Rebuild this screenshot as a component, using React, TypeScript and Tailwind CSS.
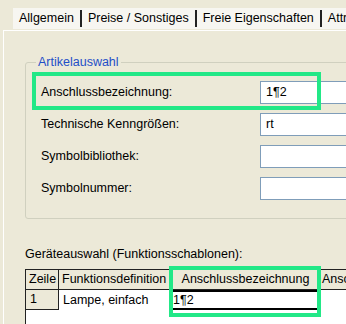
export default function App() {
  const tabs = ["Allgemein", "Preise / Sonstiges", "Freie Eigenschaften", "Attribute"];
  const rows = [
    { label: "Anschlussbezeichnung:", value: "1¶2" },
    { label: "Technische Kenngrößen:", value: "rt" },
    { label: "Symbolbibliothek:", value: "" },
    { label: "Symbolnummer:", value: "" },
  ];
  return (
    <div className="relative w-[346px] h-[324px] overflow-hidden bg-[#ECE9D8] text-black text-[12.5px] leading-[15px] font-['Liberation_Sans',Arial,sans-serif]">
      {/* tab strip */}
      <div className="flex h-[30px] pt-[8px] pl-[13px]">
        <div className="flex h-[21px] items-center bg-[#F7F6F1] whitespace-nowrap">
          {tabs.map((t, i) => (
            <div key={t} className="flex items-center h-full">
              <span className="px-[6px]">{t}</span>
              {i < tabs.length - 1 && <span className="h-[17px] w-[2px] bg-[#222]" />}
            </div>
          ))}
        </div>
      </div>
      {/* panel */}
      <div className="ml-[3px] h-[294px] border-l border-t border-white pl-[21px]">
        <fieldset className="mt-[24px] w-[400px] rounded-[3px] border border-[#D0D0BF] pl-[15px] pt-[11px] pb-[18px]">
          <legend className="ml-[-5px] px-[2px] text-[#1F4FC8]">Artikelauswahl</legend>
          <div className="flex flex-col gap-[9px]">
            {rows.map((r) => (
              <div key={r.label} className="flex items-center h-[23px]">
                <span className="w-[219px]">{r.label}</span>
                <div className="h-[23px] w-[130px] border border-[#7F9DB9] bg-white pl-[5px] flex items-center">
                  {r.value}
                </div>
              </div>
            ))}
          </div>
        </fieldset>
        <div className="mt-[28px]">Geräteauswahl (Funktionsschablonen):</div>
        <div className="mt-[7px] w-[400px] border-l border-t border-[#222] bg-white h-[60px]">
          <div className="flex h-[20px] bg-[#ECE9D8] border-b border-[#222]">
            <div className="w-[33px] border-r border-[#222] flex items-center pl-[3px]">Zeile</div>
            <div className="w-[114px] border-r border-[#222] flex items-center pl-[3px]">Funktionsdefinition</div>
            <div className="w-[146px] border-r border-[#222] flex items-center justify-center">Anschlussbezeichnung</div>
            <div className="flex-1 flex items-center pl-[3px]">Anschluss</div>
          </div>
          <div className="flex h-[20px]">
            <div className="w-[33px] border-r border-b border-[#222] bg-[#ECE9D8] flex items-center pl-[4px]">1</div>
            <div className="w-[114px] border-r border-[#222] flex items-center pl-[4px]">Lampe, einfach</div>
            <div className="w-[146px] border-y-[2px] border-black flex items-center">1¶2</div>
            <div className="flex-1" />
          </div>
        </div>
      </div>
      {/* annotation highlights */}
      <div className="absolute left-[32px] top-[72px] w-[289px] h-[38px] border-[4px] border-[#22E887]" />
      <div className="absolute left-[169px] top-[266px] w-[152px] h-[51px] border-[4px] border-[#22E887]" />
    </div>
  );
}
